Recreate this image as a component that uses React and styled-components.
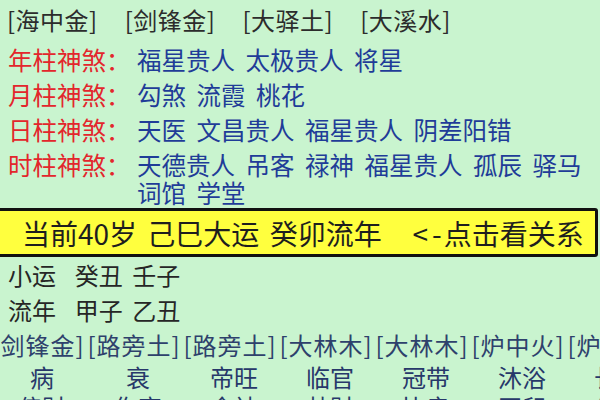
import React from 'react';
import styled, { createGlobalStyle } from 'styled-components';

const GlobalStyle = createGlobalStyle`
html, body {
  margin: 0;
  padding: 0;
  width: 600px;
  height: 400px;
  overflow: hidden;
  background: #c9f4cf;
}
body {
  font-family: "Noto Sans CJK SC", "Noto Sans", sans-serif;
}
`

const Page = styled.div`
box-sizing: border-box;
width: 600px;
height: 400px;
overflow: hidden;
padding-top: 3px;
`
const NaYinTop = styled.div`
display: flex;
gap: 27px;
padding-left: 7px;
font-size: 24px;
line-height: 34px;
color: #2c2c2c;
letter-spacing: 0.5px;
`
const ShenShaList = styled.div`
display: flex;
flex-direction: column;
gap: 7px;
padding: 9px 0 0 8px;
`
const ShenShaRow = styled.div`
display: flex;
font-size: 24.5px;
line-height: 28px;
`
const Label = styled.div`
flex: none;
width: 129px;
color: #e3262c;
`
const Values = styled.div`
flex: 1;
padding-right: 12px;
color: #1f3c98;
word-spacing: 5px;
word-break: keep-all;
`
const YunBar = styled.div`
box-sizing: border-box;
margin: 1px 2px 0 -3px;
height: 49px;
display: flex;
align-items: center;
padding-left: 22px;
background: #ffff3e;
border: 3px solid #111;
border-radius: 3px;
font-size: 28px;
color: #1e1e1e;
white-space: pre;
word-spacing: 4px;
`
const Arrow = styled.span`
letter-spacing: 4px;
margin-right: -2px;
`
const YunLine = styled.div`
padding-left: 8px;
height: 35px;
font-size: 24px;
line-height: 35px;
color: #262626;
white-space: pre;
word-spacing: 4px;
`
const Grid = styled.div`
display: grid;
grid-template-columns: repeat(7, 96px);
margin-left: ${p => p.$shift}px;
width: 672px;
font-size: 24px;
line-height: ${p => p.$line}px;
color: ${p => p.$color};
margin-top: ${p => p.$top || 0}px;
letter-spacing: ${p => p.$spacing || 0}px;
`
const Cell = styled.div`
text-align: center;
white-space: nowrap;
`

const shensha = [
  ['年柱神煞：', '福星贵人 太极贵人 将星'],
  ['月柱神煞：', '勾煞 流霞 桃花'],
  ['日柱神煞：', '天医 文昌贵人 福星贵人 阴差阳错'],
  ['时柱神煞：', '天德贵人 吊客 禄神 福星贵人 孤辰 驿马 词馆 学堂'],
]

const nayin = ['[剑锋金]', '[路旁土]', '[路旁土]', '[大林木]', '[大林木]', '[炉中火]', '[炉中火]']
const phases = ['病', '衰', '帝旺', '临官', '冠带', '沐浴', '长生']
const gods = ['偏财', '伤官', '食神', '劫财', '比肩', '正印', '偏印']

const App = () => {
  return (
    <Page>
      <GlobalStyle />
      <NaYinTop>
        <span>[海中金]</span>
        <span>[剑锋金]</span>
        <span>[大驿土]</span>
        <span>[大溪水]</span>
      </NaYinTop>
      <ShenShaList>
        {shensha.map(([label, value]) => (
          <ShenShaRow key={label}>
            <Label>{label}</Label>
            <Values>{value}</Values>
          </ShenShaRow>
        ))}
      </ShenShaList>
      <YunBar>
        {'当前40岁 己巳大运 癸卯流年   '}
        <Arrow>{'<-'}</Arrow>
        {'点击看关系'}
      </YunBar>
      <YunLine>{'小运  癸丑 壬子'}</YunLine>
      <YunLine>{'流年  甲子 乙丑'}</YunLine>
      <Grid $shift={-10} $line={32} $color="#2e416c" $top={2} $spacing={1}>
        {nayin.map((n, i) => <Cell key={i}>{n}</Cell>)}
      </Grid>
      <Grid $shift={-6} $line={32} $color="#27386a">
        {phases.map((n, i) => <Cell key={i}>{n}</Cell>)}
      </Grid>
      <Grid $shift={-6} $line={28} $color="#27386a">
        {gods.map((n, i) => <Cell key={i}>{n}</Cell>)}
      </Grid>
    </Page>
  )
}

export default App
